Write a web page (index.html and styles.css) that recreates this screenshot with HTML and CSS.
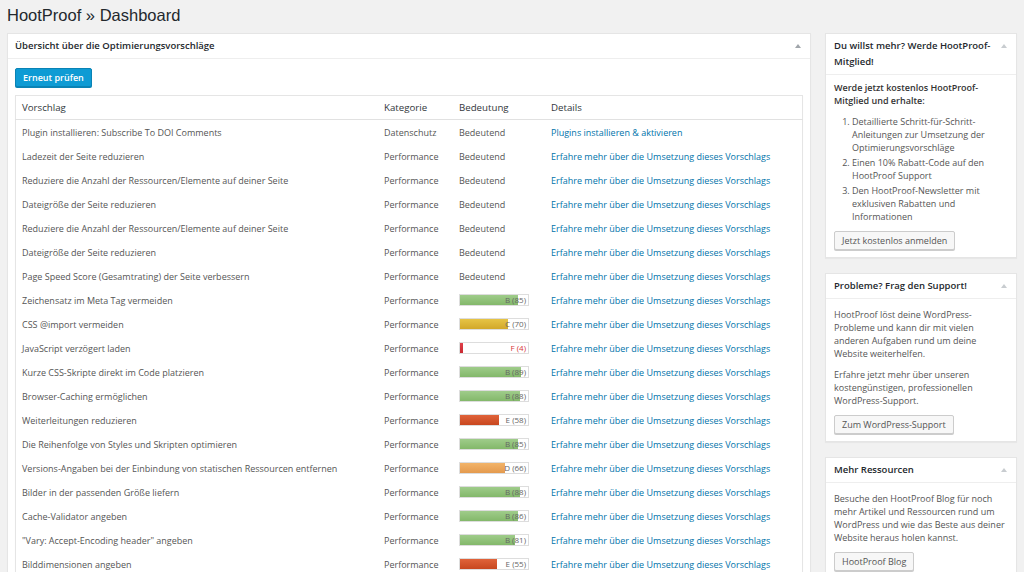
FILE: index.html
```html
<!DOCTYPE html>
<html lang="de">
  <head>
    <meta charset="UTF-8" />
    <title>HootProof » Dashboard</title>
    <link rel="stylesheet" href="styles.css">
  </head>
  <body>
    <div class="wrap">
      <h1>HootProof » Dashboard</h1>

      <div class="columns">
        <!-- Hauptbox -->
        <div class="postbox main-box">
          <div class="postbox-head">
            <h2>Übersicht über die Optimierungsvorschläge</h2>
            <span class="toggle"></span>
          </div>
          <div class="inside">
            <button class="button-primary">Erneut prüfen</button>
            <table class="suggestions">
              <thead>
                <tr>
                  <th class="col-name">Vorschlag</th>
                  <th class="col-cat">Kategorie</th>
                  <th class="col-rank">Bedeutung</th>
                  <th>Details</th>
                </tr>
              </thead>
              <tbody id="rows"></tbody>
            </table>
          </div>
        </div>

        <!-- Seitenleiste -->
        <div class="sidebar">
          <div class="postbox member-box">
            <div class="postbox-head">
              <h2>Du willst mehr? Werde HootProof-Mitglied!</h2>
              <span class="toggle"></span>
            </div>
            <div class="inside">
              <p class="strong">Werde jetzt kostenlos HootProof-Mitglied und erhalte:</p>
              <ol>
                <li>Detaillierte Schritt-für-Schritt-Anleitungen zur Umsetzung der Optimierungsvorschläge</li>
                <li>Einen 10% Rabatt-Code auf den HootProof Support</li>
                <li>Den HootProof-Newsletter mit exklusiven Rabatten und Informationen</li>
              </ol>
              <button class="button">Jetzt kostenlos anmelden</button>
            </div>
          </div>

          <div class="postbox">
            <div class="postbox-head">
              <h2>Probleme? Frag den Support!</h2>
              <span class="toggle"></span>
            </div>
            <div class="inside">
              <p>HootProof löst deine WordPress-Probleme und kann dir mit vielen anderen Aufgaben rund um deine Website weiterhelfen.</p>
              <p>Erfahre jetzt mehr über unseren kostengünstigen, professionellen WordPress-Support.</p>
              <button class="button">Zum WordPress-Support</button>
            </div>
          </div>

          <div class="postbox">
            <div class="postbox-head">
              <h2>Mehr Ressourcen</h2>
              <span class="toggle"></span>
            </div>
            <div class="inside">
              <p>Besuche den HootProof Blog für noch mehr Artikel und Ressourcen rund um WordPress und wie das Beste aus deiner Website heraus holen kannst.</p>
              <button class="button">HootProof Blog</button>
            </div>
          </div>
        </div>
      </div>
    </div>

    <script>
      // Vorschläge: [Name, Kategorie, Bedeutung oder Note, Punkte]
      const suggestions = [
        ["Plugin installieren: Subscribe To DOI Comments", "Datenschutz", "Bedeutend", null, "plugin"],
        ["Ladezeit der Seite reduzieren", "Performance", "Bedeutend"],
        ["Reduziere die Anzahl der Ressourcen/Elemente auf deiner Seite", "Performance", "Bedeutend"],
        ["Dateigröße der Seite reduzieren", "Performance", "Bedeutend"],
        ["Reduziere die Anzahl der Ressourcen/Elemente auf deiner Seite", "Performance", "Bedeutend"],
        ["Dateigröße der Seite reduzieren", "Performance", "Bedeutend"],
        ["Page Speed Score (Gesamtrating) der Seite verbessern", "Performance", "Bedeutend"],
        ["Zeichensatz im Meta Tag vermeiden", "Performance", "B", 85],
        ["CSS @import vermeiden", "Performance", "C", 70],
        ["JavaScript verzögert laden", "Performance", "F", 4],
        ["Kurze CSS-Skripte direkt im Code platzieren", "Performance", "B", 89],
        ["Browser-Caching ermöglichen", "Performance", "B", 88],
        ["Weiterleitungen reduzieren", "Performance", "E", 58],
        ["Die Reihenfolge von Styles und Skripten optimieren", "Performance", "B", 85],
        ["Versions-Angaben bei der Einbindung von statischen Ressourcen entfernen", "Performance", "D", 66],
        ["Bilder in der passenden Größe liefern", "Performance", "B", 88],
        ["Cache-Validator angeben", "Performance", "B", 86],
        ["\"Vary: Accept-Encoding header\" angeben", "Performance", "B", 81],
        ["Bilddimensionen angeben", "Performance", "E", 55]
      ];

      const tbody = document.getElementById("rows");
      suggestions.forEach(function (s) {
        const tr = document.createElement("tr");
        let rank = s[2];
        if (s[3] !== undefined && s[3] !== null) {
          rank = `
            <div class="grade grade-${s[2].toLowerCase()}">
              <div class="grade-fill" style="width: ${s[3]}%"></div>
              <span class="grade-label">${s[2]} (${s[3]})</span>
            </div>`;
        }
        const link = s[4] === "plugin"
          ? "Plugins installieren &amp; aktivieren"
          : "Erfahre mehr über die Umsetzung dieses Vorschlags";
        tr.innerHTML = `
          <td>${s[0]}</td>
          <td>${s[1]}</td>
          <td>${rank}</td>
          <td><a href="#">${link}</a></td>`;
        tbody.appendChild(tr);
      });
    </script>
  </body>
</html>
```

FILE: styles.css
```css
body {
  font-family: "Open Sans", "Noto Sans", sans-serif;
  margin: 0;
  padding: 0;
  background-color: #f1f1f1;
  color: #444;
  font-size: 9px;
  overflow: hidden;
}
.wrap {
  padding: 0 7px;
}
h1 {
  font-family: "Liberation Sans", Arial, sans-serif;
  font-size: 16.5px;
  font-weight: 400;
  color: #23282d;
  margin: 0;
  padding: 4px 0 7px;
  line-height: 22px;
}
.columns {
  display: flex;
  align-items: flex-start;
  gap: 14px;
}
.main-box {
  width: 802px;
  flex: none;
}
.sidebar {
  width: 192px;
  flex: none;
}
.postbox {
  background-color: #fff;
  border: 1px solid #e5e5e5;
  box-shadow: 0 1px 1px rgba(0, 0, 0, 0.04);
  margin-bottom: 15px;
}
.postbox-head {
  display: flex;
  justify-content: space-between;
  align-items: flex-start;
  border-bottom: 1px solid #eee;
  padding: 4px 9px 4px 8px;
}
.main-box .postbox-head {
  padding-left: 7px;
}
.postbox-head h2 {
  font-size: 9.5px;
  font-weight: 600;
  color: #23282d;
  margin: 0;
  line-height: 16px;
}
.toggle {
  width: 0;
  height: 0;
  border-left: 3px solid transparent;
  border-right: 3px solid transparent;
  border-bottom: 4px solid #a0a5aa;
  margin-top: 6px;
  margin-left: 10px;
  flex: none;
}
.sidebar .toggle {
  border-bottom-color: #c8ccd0;
}
.inside {
  padding: 9px 8px 7px;
}
.member-box .inside {
  padding-top: 6px;
}
.main-box .inside {
  padding: 9px 7px 0;
}
.button-primary {
  font-family: inherit;
  background-color: #0e9bd4;
  border: 1px solid #0a83b5;
  border-radius: 2px;
  color: #fff;
  font-weight: 600;
  font-size: 9px;
  height: 19px;
  padding: 0 7px;
  box-shadow: 0 1px 0 #0a83b5;
  margin-bottom: 8px;
}
.button {
  font-family: inherit;
  background-color: #f7f7f7;
  border: 1px solid #ccc;
  border-radius: 2px;
  color: #555;
  font-size: 9px;
  height: 19px;
  padding: 0 7px;
  box-shadow: 0 1px 0 #ccc;
}
.suggestions {
  width: 788px;
  border: 1px solid #e5e5e5;
  border-collapse: collapse;
  box-shadow: 0 1px 1px rgba(0, 0, 0, 0.04);
}
.suggestions th {
  text-align: left;
  font-weight: 400;
  font-size: 9.7px;
  color: #32373c;
  height: 23px;
  padding: 0 6px;
  border-bottom: 1px solid #e1e1e1;
}
.suggestions td {
  height: 24px;
  padding: 0 6px;
  color: #555;
  white-space: nowrap;
}
.col-name {
  width: 350px;
}
.col-cat {
  width: 63px;
}
.col-rank {
  width: 80px;
}
.suggestions a {
  color: #0073aa;
  text-decoration: none;
}
.grade {
  position: relative;
  width: 68px;
  height: 10px;
  border: 1px solid #ddd;
  background-color: #fff;
}
.grade-fill {
  height: 100%;
  background: linear-gradient(#9fcc8a, #83b86a);
}
.grade-label {
  position: absolute;
  right: 2px;
  top: -2px;
  font-size: 8px;
  line-height: 14px;
  color: #666;
}
.grade-c .grade-fill {
  background: linear-gradient(#e6c446, #d2a82a);
}
.grade-d .grade-fill {
  background: linear-gradient(#f2b46a, #e49a4e);
}
.grade-e .grade-fill {
  background: linear-gradient(#e0633a, #c8471f);
}
.grade-f .grade-fill {
  background: linear-gradient(#e0404a, #c82830);
}
.grade-f .grade-label {
  color: #d63638;
}
.inside p {
  margin: 0 0 8px;
  line-height: 13px;
  color: #555;
}
.inside p.strong {
  font-weight: 600;
  color: #333;
}
.inside ol {
  margin: 0 0 8px;
  padding-left: 18px;
  color: #555;
}
.inside li {
  line-height: 13px;
  margin-bottom: 2px;
}
```
